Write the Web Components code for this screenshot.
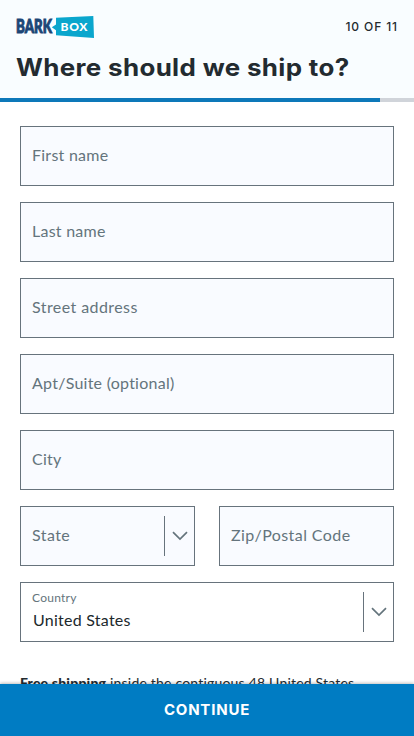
<!DOCTYPE html>
<html lang="en">
<head>
<meta charset="utf-8">
<meta name="viewport" content="width=device-width, initial-scale=1">
<title>BarkBox - Shipping</title>
<style>
  body { margin: 0; background: #fff; font-family: Lato, "Open Sans", sans-serif; }
</style>
</head>
<body>
<checkout-page></checkout-page>

<script>
const CHEVRON = `
<svg width="16" height="10" viewBox="0 0 16 10" fill="none" stroke="currentColor" stroke-width="1.7">
  <path d="M1 1.2 8 8 15 1.2"/>
</svg>`;

class BarkLogo extends HTMLElement {
  constructor() {
    super();
    this.attachShadow({ mode: "open" }).innerHTML = `
<style>
  :host { display: block; width: 80px; height: 24px; }
  svg { display: block; overflow: visible; }
  text { font-family: Lato, sans-serif; font-weight: 900; }
</style>
<svg width="80" height="24" viewBox="0 0 80 24" role="img" aria-label="BarkBox">
  <path fill="#0aa6cd" d="M40 1.7 77.3 0 78 22 40 19.3V14.2L35.8 11.3 40 8.4Z"/>
  <text transform="translate(0 16.6) scale(.74 1)" font-size="18" fill="#1c4676" stroke="#1c4676" stroke-width="1">BARK</text>
  <text x="44.5" y="15.2" font-size="12" letter-spacing="0.7" fill="#fff">BOX</text>
</svg>`;
  }
}
customElements.define("bark-logo", BarkLogo);

class StepHeader extends HTMLElement {
  connectedCallback() {
    const step = Number(this.getAttribute("step"));
    const total = Number(this.getAttribute("total"));
    this.attachShadow({ mode: "open" }).innerHTML = `
<style>
  :host { display: block; height: 102px; background: #f9fdff; }
  .inner { box-sizing: border-box; height: 98px; padding: 16px 16px 0; }
  .top { display: flex; justify-content: space-between; height: 32px; }
  .count { font: 500 12px/22px Inter, sans-serif; letter-spacing: 0.9px; color: #232b2f; }
  h1 {
    margin: 0;
    font: 700 24px/39px Inter, sans-serif;
    letter-spacing: 0.32px;
    white-space: nowrap;
    color: #232b30;
    transform: scaleX(1.08);
    transform-origin: left;
  }
  .track { height: 4px; background: #d0d4da; }
  .bar { height: 4px; width: 380px; background: #0d78b9; }
</style>
<div class="inner">
  <div class="top">
    <bark-logo></bark-logo>
    <div class="count">${step} OF ${total}</div>
  </div>
  <h1><slot></slot></h1>
</div>
<div class="track"><div class="bar"></div></div>`;
  }
}
customElements.define("step-header", StepHeader);

class FormField extends HTMLElement {
  connectedCallback() {
    const value = this.getAttribute("value");
    this.attachShadow({ mode: "open" }).innerHTML = `
<style>
  :host {
    display: flex;
    box-sizing: border-box;
    align-items: center;
    height: 60px;
    padding-left: 11px;
    border: 1px solid #67737c;
    background: #f9fbff;
    color: #64747c;
  }
  :host([value]) { background: #fff; }
  .text { flex: 1; padding-bottom: 2px; }
  :host([value]) .text { padding-bottom: 4px; }
  .label { font-size: 16px; line-height: 22px; letter-spacing: var(--spacing, 0.25px); white-space: nowrap; }
  :host([value]) .label { font-size: 12px; line-height: 18px; letter-spacing: 0.25px; }
  .value { padding: 3px 0 2px 1px; font-size: 16px; line-height: 20px; letter-spacing: 0.25px; color: #20282c; }
  .arrow {
    display: flex;
    align-items: center;
    justify-content: center;
    width: 29px;
    height: 40px;
    border-left: 1px solid #67737c;
  }
</style>
<div class="text">
  <div class="label"><slot></slot></div>
  ${value ? `<div class="value">${value}</div>` : ""}
</div>
${this.hasAttribute("select") ? `<div class="arrow">${CHEVRON}</div>` : ""}`;
  }
}
customElements.define("form-field", FormField);

class ActionBar extends HTMLElement {
  constructor() {
    super();
    this.attachShadow({ mode: "open" }).innerHTML = `
<style>
  :host {
    position: absolute;
    left: 0; right: 0; bottom: 0;
    height: 52px;
    background: #007cc3;
    box-shadow: 0 -1px 3px rgba(0, 0, 0, 0.25);
  }
  button {
    width: 100%;
    height: 52px;
    padding: 0;
    border: 0;
    background: none;
    color: #fff;
    font: 700 15px/52px Inter, sans-serif;
    letter-spacing: 0.8px;
  }
</style>
<button><slot></slot></button>`;
  }
}
customElements.define("action-bar", ActionBar);

class CheckoutPage extends HTMLElement {
  constructor() {
    super();
    this.attachShadow({ mode: "open" }).innerHTML = `
<style>
  :host { display: block; position: relative; width: 100%; height: 736px; overflow: hidden; }
  form { display: flex; flex-direction: column; gap: 16px; padding: 24px 20px 0; }
  .row { display: grid; grid-template-columns: 1fr 1fr; gap: 24px; }
  .wide { --spacing: 0.42px; }
  p { margin: 30px 20px 0; font-size: 14px; line-height: 22px; letter-spacing: 0.2px; white-space: nowrap; color: #232b30; }
  b { font-weight: 900; }
</style>
<step-header step="10" total="11">Where should we ship to?</step-header>
<form>
  <form-field>First name</form-field>
  <form-field>Last name</form-field>
  <form-field class="wide">Street address</form-field>
  <form-field>Apt/Suite (optional)</form-field>
  <form-field>City</form-field>
  <div class="row">
    <form-field class="wide" select>State</form-field>
    <form-field class="wide">Zip/Postal Code</form-field>
  </div>
  <form-field select value="United States">Country</form-field>
</form>
<p><b>Free shipping</b> inside the contiguous 48 United States.</p>
<action-bar>CONTINUE</action-bar>`;
  }
}
customElements.define("checkout-page", CheckoutPage);
</script>
</body>
</html>
